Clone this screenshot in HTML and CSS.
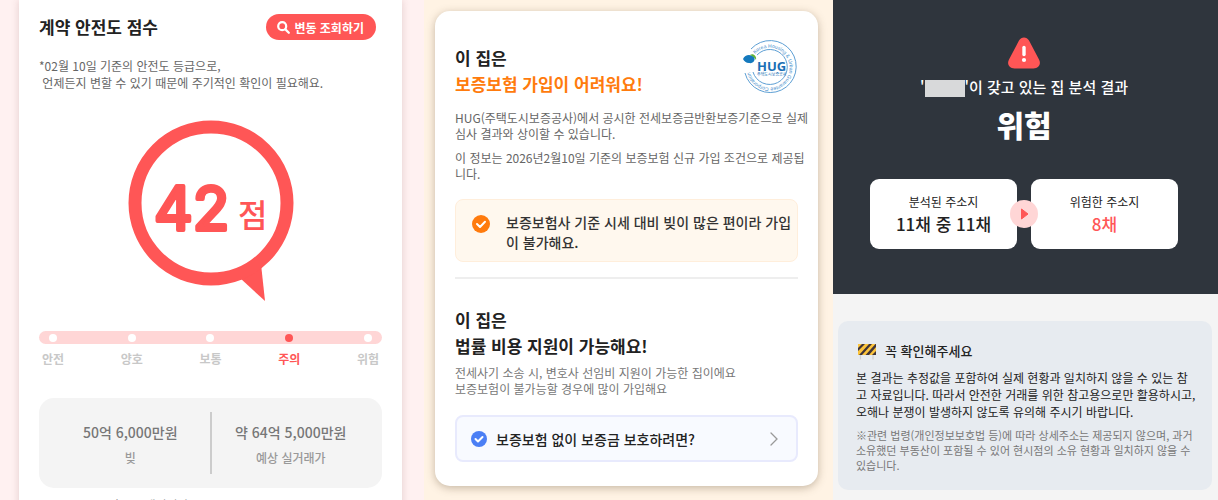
FILE: index.html
```
<!DOCTYPE html>
<html lang="ko">
<head>
  <meta charset="UTF-8">
  <meta name="viewport" content="width=device-width, initial-scale=1.0">
  <title>계약 안전도 점수</title>
  <link rel="stylesheet" href="styles.css">
</head>
<body>
  <main class="screens">

    <!-- Safety score -->
    <section class="screen screen-score">
      <div class="sheet">
        <header class="sheet-head">
          <h1 class="sheet-title">계약 안전도 점수</h1>
          <button type="button" class="check-btn">
            <svg width="13" height="13" viewBox="0 0 13 13" fill="none" stroke="#fff" stroke-width="2.200" stroke-linecap="round" aria-hidden="true">
              <circle cx="5.200" cy="5.200" r="4"/>
              <path d="M8.400 8.400L11.800 11.800"/>
            </svg>
            변동 조회하기
          </button>
        </header>
        <p class="note">*02월 10일 기준의 안전도 등급으로,<br>&nbsp;언제든지 변할 수 있기 때문에 주기적인 확인이 필요해요.</p>

        <svg class="bubble" width="166" height="182" viewBox="0 0 166 182" role="img" aria-label="42점">
          <path d="M112 158L137 181L133 144Z" fill="#ff5656"/>
          <circle cx="83" cy="83" r="76" fill="#fff" stroke="#ff5656" stroke-width="13"/>
          <text class="bubble-num" x="26" y="110">42</text>
          <text class="bubble-unit" x="110" y="107">점</text>
        </svg>

        <ol class="steps">
          <li class="step">안전</li>
          <li class="step">양호</li>
          <li class="step">보통</li>
          <li class="step step-on">주의</li>
          <li class="step">위험</li>
        </ol>

        <dl class="amounts">
          <div class="amount">
            <dt>빚</dt>
            <dd>50억 6,000만원</dd>
          </div>
          <div class="amount">
            <dt>예상 실거래가</dt>
            <dd>약 64억 5,000만원</dd>
          </div>
        </dl>
        <p class="foot">*2026.02.10 기준 시세입니다.</p>
      </div>
    </section>

    <!-- Guarantee insurance -->
    <section class="screen screen-insure">
      <article class="card">
        <header class="card-head">
          <h2 class="card-title">이 집은<br><span class="orange">보증보험 가입이 어려워요!</span></h2>
          <svg class="hug" width="56" height="56" viewBox="0 0 56 56" role="img" aria-label="HUG 주택도시보증공사">
            <defs>
              <path id="ring" d="M13 15A20 20 0 1 1 8 33"/>
            </defs>
            <g fill="none" stroke="#5d9fd4">
              <path d="M9 10A26 26 0 1 1 3 34" stroke-width="1"/>
              <path d="M15 16A17.500 17.500 0 1 1 11 33" stroke-width="1"/>
            </g>
            <text class="hug-ring"><textPath href="#ring">Korea Housing &amp; Urban Guarantee Corporation</textPath></text>
            <path d="M1 20C3 15 9 15 12 18C14 21 11 25 7 24C4 24 2 22 1 20Z" fill="#1479bd"/>
            <path d="M8 16C11 14 15 17 14 21C13 19 11 17 8 16Z" fill="#5fb336"/>
            <text class="hug-name" x="15" y="32">HUG</text>
            <text class="hug-sub" x="15" y="37">주택도시보증공사</text>
          </svg>
        </header>
        <p class="desc">HUG(주택도시보증공사)에서 공시한 전세보증금반환보증기준으로 실제<br>심사 결과와 상이할 수 있습니다.</p>
        <p class="desc">이 정보는 2026년2월10일 기준의 보증보험 신규 가입 조건으로 제공됩<br>니다.</p>

        <div class="callout">
          <svg width="18" height="18" viewBox="0 0 18 18" fill="none" aria-hidden="true">
            <circle cx="9" cy="9" r="9" fill="#ff7b0d"/>
            <path d="M5 9L8 12L13 6.800" stroke="#fff" stroke-width="2" stroke-linecap="round" stroke-linejoin="round"/>
          </svg>
          <p>보증보험사 기준 시세 대비 빚이 많은 편이라 가입<br>이 불가해요.</p>
        </div>

        <hr class="line">

        <h2 class="card-title">이 집은<br>법률 비용 지원이 가능해요!</h2>
        <p class="desc desc-light">전세사기 소송 시, 변호사 선임비 지원이 가능한 집이에요<br>보증보험이 불가능할 경우에 많이 가입해요</p>

        <a href="#" class="more">
          <svg width="16" height="16" viewBox="0 0 16 16" fill="none" aria-hidden="true">
            <circle cx="8" cy="8" r="8" fill="#4b7ff5"/>
            <path d="M4.500 8L7 10.500L11.500 6" stroke="#fff" stroke-width="2" stroke-linecap="round" stroke-linejoin="round"/>
          </svg>
          <span>보증보험 없이 보증금 보호하려면?</span>
          <svg class="arrow" width="8" height="14" viewBox="0 0 8 14" fill="none" stroke="#999" stroke-width="1.300" stroke-linecap="round" aria-hidden="true">
            <path d="M1 1L7 7L1 13"/>
          </svg>
        </a>
      </article>
    </section>

    <!-- Owner analysis -->
    <section class="screen screen-owner">
      <div class="result">
        <svg width="34" height="32" viewBox="0 0 34 32" aria-hidden="true">
          <path d="M12 3.500C14.400-.5 19.600-.5 22 3.500L32 22.500C34.500 27 31.500 31.500 26.500 31.500H7.500C2.500 31.500-.5 27 2 22.500Z" fill="#ff5656"/>
          <path d="M17 10.500V17.500" stroke="#fff" stroke-width="3.400" stroke-linecap="round"/>
          <circle cx="17" cy="23" r="2.100" fill="#fff"/>
        </svg>
        <p class="result-sub">'<span class="mask"></span>'이 갖고 있는 집 분석 결과</p>
        <h2 class="result-title">위험</h2>
        <div class="counts">
          <div class="count">
            <span>분석된 주소지</span>
            <strong>11채 중 11채</strong>
          </div>
          <div class="count">
            <span>위험한 주소지</span>
            <strong class="red">8채</strong>
          </div>
          <svg class="counts-arrow" width="28" height="28" viewBox="0 0 28 28" aria-hidden="true">
            <circle cx="14" cy="14" r="14" fill="#ffd6d6"/>
            <path d="M11.500 9L18 14L11.500 19Z" fill="#ff5656" stroke="#ff5656" stroke-linejoin="round"/>
          </svg>
        </div>
      </div>

      <div class="notice">
        <h3 class="notice-title">
          <svg width="20" height="17" viewBox="0 0 20 17" aria-hidden="true">
            <path d="M4.500 10V16.500M17 10V16.500" stroke="#cfcfcf" stroke-width="1.200"/>
            <path d="M2 1H20V12H2Z" fill="#fcc43c"/>
            <path d="M2 5L6 1H9L2 8ZM3 12L13 1H16L6 12ZM9.500 12L19.500 1H20V4L13 12ZM16 12L20 8V12Z" fill="#40343a"/>
          </svg>
          꼭 확인해주세요
        </h3>
        <p class="notice-text">본 결과는 추정값을 포함하여 실제 현황과 일치하지 않을 수 있는 참<br>고 자료입니다. 따라서 안전한 거래를 위한 참고용으로만 활용하시고,<br>오해나 분쟁이 발생하지 않도록 유의해 주시기 바랍니다.</p>
        <p class="notice-small">※관련 법령(개인정보보호법 등)에 따라 상세주소는 제공되지 않으며, 과거<br>소유했던 부동산이 포함될 수 있어 현시점의 소유 현황과 일치하지 않을 수<br>있습니다.</p>
      </div>
    </section>

  </main>
</body>
</html>
```
FILE: styles.css
```
* {
  box-sizing: border-box;
}
body {
  margin: 0;
  font-family: "Noto Sans CJK KR", sans-serif;
  font-size: 12px;
  color: #222;
}
h1, h2, h3, p, dl, dd, ol {
  margin: 0;
  padding: 0;
}
.screens {
  display: grid;
  grid-template-columns: 424fr 409fr 385fr;
  height: 100vh;
  overflow: hidden;
}
.screen {
  min-width: 0;
  overflow: hidden;
}

/* Safety score */
.screen-score {
  padding: 0 22px 0 19px;
  background: #fff1f1;
}
.sheet {
  min-height: 100%;
  padding: 14px 20px 0;
  background: #fff;
  box-shadow: 0 0 8px rgba(120, 60, 60, 0.2);
}
.sheet-head {
  display: flex;
  justify-content: space-between;
  align-items: center;
  padding-right: 6px;
}
.sheet-title {
  font-size: 17px;
  line-height: 26px;
}
.check-btn {
  display: flex;
  align-items: center;
  gap: 4px;
  height: 26px;
  padding: 0 12px 0 11px;
  border: 0;
  border-radius: 13px;
  background: #ff5656;
  color: #fff;
  font: bold 12px "Noto Sans CJK KR", sans-serif;
  cursor: pointer;
}
.note {
  margin-top: 17px;
  line-height: 17px;
  color: #666;
  white-space: nowrap;
}
.bubble {
  display: block;
  margin: 29px auto 0;
}
.bubble-num {
  font: 400 60px Inter, sans-serif;
  fill: #ff5656;
  stroke: #ff5656;
  stroke-width: 4px;
  stroke-linejoin: round;
}
.bubble-unit {
  font-size: 32px;
  font-weight: 500;
  fill: #ff5656;
}
.steps {
  position: relative;
  display: flex;
  justify-content: space-between;
  margin-top: 29px;
  padding: 0 3px;
  list-style: none;
  font-weight: bold;
  line-height: 18px;
  color: #c8c8c8;
}
.steps::before {
  content: "";
  position: absolute;
  top: 0;
  left: 0;
  right: 0;
  height: 13px;
  border-radius: 7px;
  background: #ffd6d6;
}
.step {
  position: relative;
  display: flex;
  flex-direction: column;
  align-items: center;
  gap: 8px;
}
.step::before {
  content: "";
  width: 8px;
  height: 8px;
  margin-top: 3px;
  border-radius: 50%;
  background: #fff;
}
.step-on {
  color: #ff5656;
}
.step-on::before {
  background: #ff5656;
}
.amounts {
  display: flex;
  margin-top: 30px;
  padding: 14px 12px;
  border-radius: 15px;
  background: #f4f4f4;
}
.amount {
  flex: 1;
  display: flex;
  flex-direction: column-reverse;
  align-items: center;
  gap: 6px;
  padding: 10px 0 6px;
}
.amount + .amount {
  border-left: 2px solid #ccc;
}
.amount dt {
  line-height: 20px;
  color: #999;
  font-weight: 500;
}
.amount dd {
  font-size: 14px;
  font-weight: 500;
  line-height: 20px;
  color: #777;
}
.foot {
  margin-top: 8px;
  line-height: 17px;
  color: #999;
}

/* Guarantee insurance */
.screen-insure {
  padding: 11px 15px 0 11px;
  background: #fff3e4;
}
.card {
  padding: 28px 20px 24px;
  border-radius: 15px;
  background: #fff;
  box-shadow: 0 2px 8px rgba(90, 70, 40, 0.35);
}
.card-head {
  display: flex;
  justify-content: space-between;
  align-items: flex-start;
  margin-bottom: 13px;
}
.card-title {
  font-size: 17px;
  line-height: 26px;
}
.card-head .card-title {
  padding-top: 6px;
}
.orange {
  color: #ff7b0d;
}
.desc {
  margin: 0 -12px 8px 0;
  line-height: 16px;
  color: #666;
  white-space: nowrap;
}
.desc-light {
  margin-top: 6px;
  color: #777;
}
.callout {
  display: flex;
  gap: 16px;
  margin-top: 17px;
  padding: 12px 8px 9px 16px;
  border: 1px solid #ffeedb;
  border-radius: 8px;
  background: #fff8ee;
  color: #333;
  font-size: 14px;
  font-weight: 500;
  line-height: 20px;
}
.callout svg {
  flex: none;
  margin-top: 3px;
}
.callout p {
  white-space: nowrap;
}
.line {
  height: 2px;
  margin: 15px 0 28px;
  border: 0;
  background: #eee;
}
.more {
  display: flex;
  align-items: center;
  gap: 9px;
  height: 47px;
  margin-top: 18px;
  padding: 0 18px 0 14px;
  border: 2px solid #e8eafd;
  border-radius: 8px;
  background: #f8faff;
  color: #222;
  font-size: 14px;
  font-weight: 500;
  text-decoration: none;
}
.arrow {
  margin-left: auto;
}
.hug {
  flex: none;
  overflow: visible;
}
.hug-ring {
  font: 5px "Liberation Sans", sans-serif;
  fill: #3d8ccb;
}
.hug-name {
  font: bold 13px "Open Sans", sans-serif;
  fill: #1a6fb5;
}
.hug-sub {
  font-size: 4px;
  fill: #1a6fb5;
}

/* Owner analysis */
.screen-owner {
  background: #f4f4f4;
}
.result {
  display: flex;
  flex-direction: column;
  align-items: center;
  padding: 37px 40px 45px 37px;
  background: #2f353d;
  color: #fff;
}
.result-sub {
  display: flex;
  margin-top: 6px;
  font-size: 15px;
  font-weight: 500;
  line-height: 24px;
}
.mask {
  width: 40px;
  height: 17px;
  margin-top: 5px;
  background: #d8d9da;
}
.result-title {
  margin-top: 5px;
  font-size: 30px;
  font-weight: 900;
  line-height: 40px;
}
.counts {
  position: relative;
  display: grid;
  grid-template-columns: 1fr 1fr;
  gap: 14px;
  width: 100%;
  margin-top: 35px;
}
.count {
  display: flex;
  flex-direction: column;
  align-items: center;
  padding: 13px 0;
  border-radius: 9px;
  background: #fff;
  color: #222;
  line-height: 20px;
}
.count strong {
  font-size: 17px;
  font-weight: 500;
  line-height: 24px;
}
.count .red {
  color: #ff5656;
}
.counts-arrow {
  position: absolute;
  top: 50%;
  left: 50%;
  transform: translate(-50%, -50%);
}
.notice {
  margin: 27px 6px 0 5px;
  padding: 20px 18px 17px;
  border-radius: 10px;
  background: #e7ebf0;
  white-space: nowrap;
}
.notice-title {
  display: flex;
  align-items: center;
  gap: 9px;
  font-size: 13px;
  font-weight: 500;
  line-height: 20px;
}
.notice-text {
  margin-top: 8px;
  line-height: 17px;
}
.notice-small {
  margin-top: 8px;
  font-size: 11px;
  line-height: 15px;
  color: #777;
}
```
